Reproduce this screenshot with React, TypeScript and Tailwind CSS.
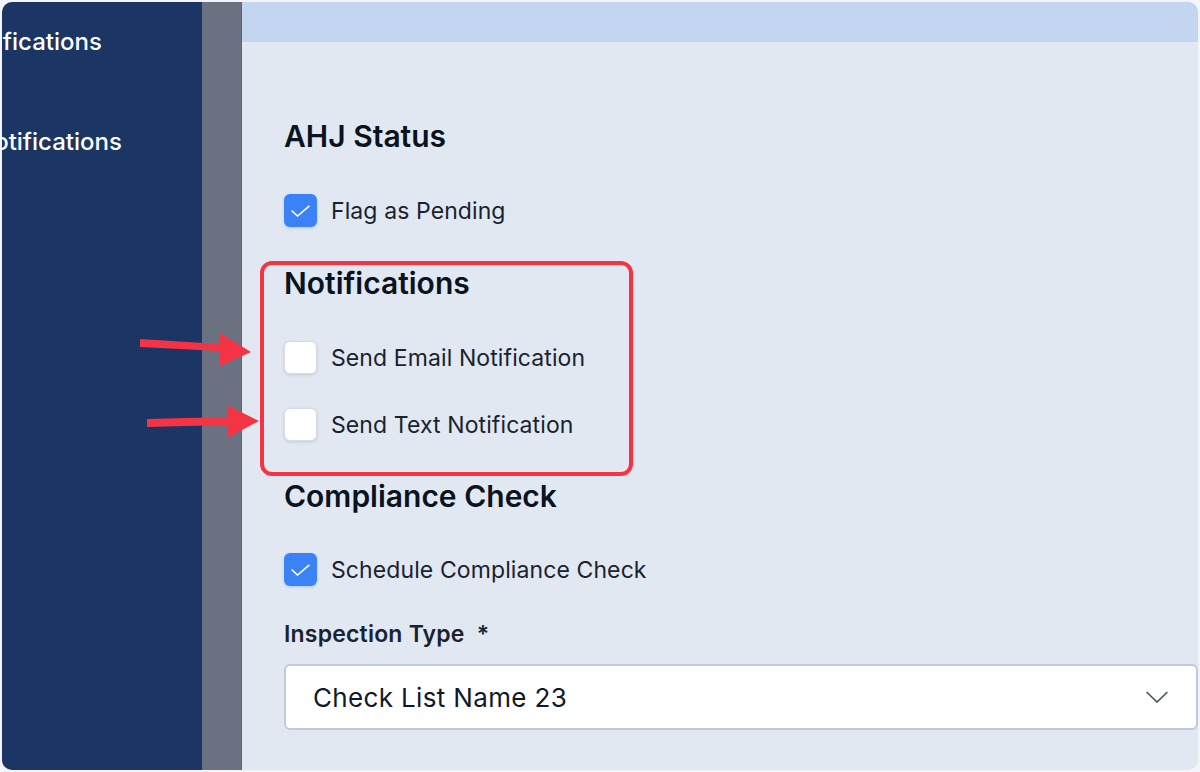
const font = "font-['Inter',sans-serif]";

function Checkbox({ checked }: { checked?: boolean }) {
  return checked ? (
    <span className="flex h-[33px] w-[33px] shrink-0 items-center justify-center rounded-[6px] bg-[#3b82f6] shadow-[0_1px_3px_rgba(59,130,246,0.3)]">
      <svg width="19" height="12" viewBox="0 0 19 12" fill="none" stroke="#fff" strokeWidth="1.6">
        <path d="M0.6 5.5 L6.5 11 L18.4 0.8" />
      </svg>
    </span>
  ) : (
    <span className="block h-[33px] w-[33px] shrink-0 rounded-[6px] border border-[#d5dbe8] bg-white shadow-[0_1px_3px_rgba(100,116,139,0.25)]" />
  );
}

function CheckRow({ label, checked, className }: { label: string; checked?: boolean; className?: string }) {
  return (
    <div className={`flex h-[33px] items-center gap-[14px] ${className ?? ""}`}>
      <Checkbox checked={checked} />
      <span className="pt-[2px] text-[23px] leading-[33px] tracking-[0.1px] text-[#1a2230]">{label}</span>
    </div>
  );
}

function Heading({ children, className }: { children: string; className?: string }) {
  return <h2 className={`text-[30px] leading-[34px] font-semibold text-[#0b1220] ${className ?? ""}`}>{children}</h2>;
}

export default function App() {
  return (
    <div className={`relative h-[772px] w-[1200px] overflow-hidden bg-[#f4f5fb] p-[2px] ${font}`}>
      <div className="flex h-[768px] overflow-hidden rounded-[10px]">
        <aside className="w-[200px] shrink-0 overflow-hidden bg-[#1b3565] pt-[22px] text-[24px] leading-[36px] font-medium whitespace-nowrap text-white">
          <p className="ml-[-46px]">Notifications</p>
          <p className="mt-[64px] ml-[-26px]">Notifications</p>
        </aside>
        <div className="w-[40px] shrink-0 border-r border-[#5f6574] bg-[#6b7180]" />
        <main className="min-w-0 flex-1 bg-[#e1e8f1]">
          <div className="h-[40px] bg-[#c4d5ef]" />
          <div className="pt-[77px] pl-[42px]">
            <Heading>AHJ Status</Heading>
            <CheckRow label="Flag as Pending" checked className="mt-[41px]" />
            <Heading className="mt-[39px]">Notifications</Heading>
            <CheckRow label="Send Email Notification" className="mt-[41px]" />
            <CheckRow label="Send Text Notification" className="mt-[34px]" />
            <Heading className="mt-[38px]">Compliance Check</Heading>
            <CheckRow label="Schedule Compliance Check" checked className="mt-[40px]" />
            <p className="mt-[34px] text-[23px] leading-[28px] font-semibold tracking-[0.2px] text-[#1a2230]">
              Inspection Type <span className="ml-[6px]">*</span>
            </p>
            <div className="mt-[16px] flex h-[66px] items-center justify-between rounded-[6px] border-2 border-[#c0cadd] bg-white pr-[28px] pl-[27px]">
              <span className="text-[26px] tracking-[0.35px] text-[#111827]">Check List Name 23</span>
              <svg width="22" height="12" viewBox="0 0 22 12" fill="none" stroke="#4b5563" strokeWidth="1.7">
                <path d="M0.6 1 L11 11 L21.4 1" />
              </svg>
            </div>
          </div>
        </main>
      </div>
      <div className="absolute top-[261px] left-[260px] h-[215px] w-[373px] rounded-[12px] border-[4px] border-[#f43344]" />
      <svg className="absolute top-[333px] left-[140px]" width="111" height="33" viewBox="0 0 111 33" fill="#f43344">
        <path d="M0 6 L80 11 L80 0 L111 19 L80 33 L80 18 L0 14 Z" />
      </svg>
      <svg className="absolute top-[405px] left-[147px]" width="112" height="33" viewBox="0 0 112 33" fill="#f43344">
        <path d="M0 14 L80 12 L80 0 L112 16 L80 33 L80 20 L0 22 Z" />
      </svg>
    </div>
  );
}
